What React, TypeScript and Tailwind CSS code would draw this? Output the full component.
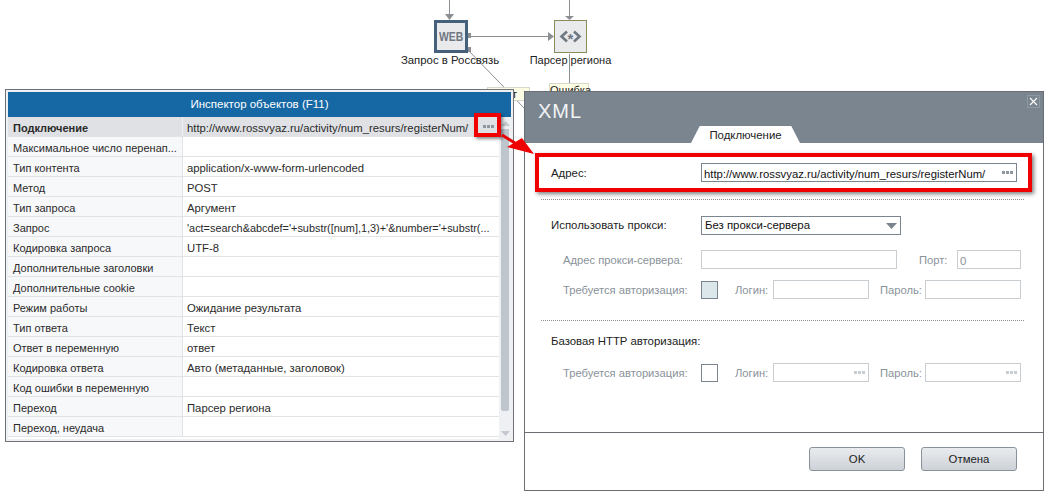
const ROWS = [
  { label: 'Подключение', value: 'http://www.rossvyaz.ru/activity/num_resurs/registerNum/' },
  { label: 'Максимальное число перенап...', value: '' },
  { label: 'Тип контента', value: 'application/x-www-form-urlencoded' },
  { label: 'Метод', value: 'POST' },
  { label: 'Тип запроса', value: 'Аргумент' },
  { label: 'Запрос', value: "'act=search&abcdef='+substr([num],1,3)+'&number='+substr(..." },
  { label: 'Кодировка запроса', value: 'UTF-8' },
  { label: 'Дополнительные заголовки', value: '' },
  { label: 'Дополнительные cookie', value: '' },
  { label: 'Режим работы', value: 'Ожидание результата' },
  { label: 'Тип ответа', value: 'Текст' },
  { label: 'Ответ в переменную', value: 'ответ' },
  { label: 'Кодировка ответа', value: 'Авто (метаданные, заголовок)' },
  { label: 'Код ошибки в переменную', value: '' },
  { label: 'Переход', value: 'Парсер региона' },
  { label: 'Переход, неудача', value: '' },
]

function Dots({ color = 'bg-[#8f979e]' }: { color?: string }) {
  return (
    <span className="ml-auto flex gap-[1px]">
      <span className={`w-[3px] h-[3px] ${color}`} />
      <span className={`w-[3px] h-[3px] ${color}`} />
      <span className={`w-[3px] h-[3px] ${color}`} />
    </span>
  )
}

function Diagram() {
  return (
    <>
      <svg className="absolute left-0 top-0" width="1052" height="140" fill="none">
        <path d="M449.5 0V16M569.5 0V16M468 36.5H550M569.5 54V84M468 50L526 110" stroke="#8b8f93" strokeWidth="1" />
        <path d="M445 14H454L449.5 20ZM565 16H574L569.5 20ZM548 32V41L554 36.5Z" fill="#8b8f93" />
        <path d="M468 33h3v5h-3zM468 47h3v5h-3z" fill="#8b8f93" />
      </svg>
      <div className="absolute left-[434px] top-[20px] w-[34px] h-[33px] border-[3px] border-[#45607a] bg-[#e8eaec] flex items-center justify-center">
        <span className="inline-block scale-x-[0.8] text-[13px] font-bold text-[#6f7881]">WEB</span>
      </div>
      <div className="absolute left-[554px] top-[20px] w-[33px] h-[33px] border border-[#8a8a5a] bg-[#e8eaec] flex items-center justify-center text-[#6f7881]">
        <svg width="9" height="13" viewBox="0 0 9 13" fill="none"><path d="M8 1.5L2.5 6.5l5.5 5" stroke="#6f7881" strokeWidth="2.6" /></svg>
        <span className="text-[15px] font-bold leading-[15px] mt-[3px]">*</span>
        <svg width="9" height="13" viewBox="0 0 9 13" fill="none"><path d="M1 1.5l5.5 5-5.5 5" stroke="#6f7881" strokeWidth="2.6" /></svg>
      </div>
      <p className="absolute left-[380px] top-[53px] w-[140px] text-center text-[11.4px] leading-[14px] text-[#222]">Запрос в Россвязь</p>
      <p className="absolute left-[510px] top-[53px] w-[121px] text-center text-[11px] leading-[14px] text-[#222]">Парсер региона</p>
      <div className="absolute left-[487px] top-[87px] w-[43px] h-[14px] bg-[#fdfde6] border border-[#d8d8c8] text-[11px] leading-[12px] text-right pr-[12px] text-[#222]">ут</div>
      <div className="absolute left-[549px] top-[83px] w-[40px] h-[14px] bg-[#fdfde6] border border-[#d8d8c8] text-[11px] leading-[12px] text-center text-[#222]">Ошибка</div>
    </>
  )
}

function Inspector() {
  return (
    <div className="absolute left-[5px] top-[89px] w-[509px] h-[353px] border border-[#6f7378] bg-[#eef0f2] p-[2px] flex flex-col">
      <div className="h-[25px] shrink-0 bg-[#1668a5] text-white text-[11.5px] flex items-center justify-center">Инспектор объектов (F11)</div>
      <div className="flex flex-1 min-h-0 overflow-hidden">
        <div className="flex-1 min-w-0 overflow-hidden flex flex-col bg-white">
          {ROWS.map((row, i) => (
            <div key={row.label} className={`h-[20px] flex shrink-0 border-b border-[#e1e3e6] text-[#2a2a2a] ${i === 0 ? 'bg-[#dfe1e4] border-[#dfe1e4]' : ''}`}>
              <div className={`w-[175px] shrink-0 pl-[5px] pt-[2px] text-[11px] leading-[19px] border-r border-[#e1e3e6] whitespace-nowrap ${i === 0 ? 'font-bold border-[#eef0f2]' : 'bg-[#f7f8fa]'}`}>{row.label}</div>
              <div className={`flex-1 min-w-0 pl-[4px] whitespace-nowrap flex items-center ${i === 5 ? 'text-[10.9px]' : 'text-[11.3px]'}`}>
                <span className="pt-[4px] leading-[19px]">{row.value}</span>
                {i === 0 && <span className="ml-auto mr-[5px]"><Dots /></span>}
              </div>
            </div>
          ))}
        </div>
        <div className="w-[12px] shrink-0 bg-[#eef0f3] flex flex-col items-center pt-[4px] pb-[3px]">
          <svg width="9" height="5" viewBox="0 0 9 5"><path d="M0 5L4.5 0 9 5Z" fill="#c4c9cf" /></svg>
          <div className="w-[8px] h-[282px] mt-[3px] rounded-b-[2px] bg-[#bfc5cd]" />
          <svg className="mt-auto" width="9" height="5" viewBox="0 0 9 5"><path d="M0 0L4.5 5 9 0Z" fill="#c4c9cf" /></svg>
        </div>
      </div>
    </div>
  )
}

function Field({ width, dots = false, value = '', strong = false }: { width: string; dots?: boolean; value?: string; strong?: boolean }) {
  return (
    <div className={`${width} h-[19px] shrink-0 border ${strong ? 'border-[#7a858f] text-[#111] text-[11.3px]' : 'border-[#c8cdd1] text-[#8a9299]'} bg-white flex items-center pl-[2px] pr-[3px] whitespace-nowrap`}>
      {value && <span className="pt-[2px] leading-[14px]">{value}</span>}
      {dots && <Dots color={strong ? 'bg-[#8f979e]' : 'bg-[#c8cdd1]'} />}
    </div>
  )
}

function AuthRow({ checked, dots, className }: { checked: boolean; dots: boolean; className: string }) {
  return (
    <div className={`flex items-center h-[19px] pl-[38px] text-[#8a9299] ${className}`}>
      <span className="w-[138px] shrink-0 pt-[2px] text-[11.2px]">Требуется авторизация:</span>
      <span className={`w-[17px] h-[18px] shrink-0 border border-[#7a858f] ${checked ? 'bg-[#dce7ec]' : 'bg-white'}`} />
      <span className="w-[38px] ml-[17px] shrink-0 pt-[2px] text-[11.2px]">Логин:</span>
      <Field width="w-[96px]" dots={dots} />
      <span className="w-[45px] ml-[11px] shrink-0 pt-[2px] text-[11.2px]">Пароль:</span>
      <Field width="w-[96px]" dots={dots} />
    </div>
  )
}

function XmlDialog() {
  return (
    <div className="absolute left-[524px] top-[91px] w-[520px] h-[400px] border border-[#6b6f73] bg-white flex flex-col text-[11.4px]">
      <div className="h-[51px] shrink-0 bg-[#7a858f] relative">
        <span className="absolute left-[13px] top-[6px] text-[20px] leading-[26px] tracking-[1px] text-[#f2f3f4]">XML</span>
        <span className="absolute right-[3px] top-[3px] w-[13px] h-[13px] border border-[#8f99a2] flex items-center justify-center">
          <svg width="9" height="9" viewBox="0 0 9 9" fill="none"><path d="M1 1l7 7M8 1L1 8" stroke="#fff" strokeWidth="1.1" /></svg>
        </span>
        <div className="absolute left-[166px] bottom-0 w-[109px] h-[17px] bg-white [clip-path:polygon(8%_0,92%_0,100%_100%,0_100%)] text-center leading-[19px] text-[#222]">Подключение</div>
      </div>

      <div className="flex-1 flex flex-col">
        <div className="flex items-center h-[19px] mt-[20px] pl-[26px] text-[#222]">
          <span className="w-[150px] shrink-0 pt-[2px]">Адрес:</span>
          <Field width="w-[316px]" strong dots value="http://www.rossvyaz.ru/activity/num_resurs/registerNum/" />
        </div>
        <div className="ml-[16px] w-[483px] mt-[17px] border-t border-dotted border-[#8a9299]" />

        <div className="flex items-center h-[19px] mt-[16px] pl-[26px] text-[#222]">
          <span className="w-[150px] shrink-0">Использовать прокси:</span>
          <div className="w-[200px] h-[19px] border border-[#7a858f] flex items-center justify-between pl-[3px] pr-[3px] text-[#111]">
            <span className="pt-[1px]">Без прокси-сервера</span>
            <svg width="11" height="6" viewBox="0 0 11 6"><path d="M0 0H11L5.5 6Z" fill="#7a858f" /></svg>
          </div>
        </div>

        <div className="flex items-center h-[19px] mt-[15px] pl-[38px] text-[#8a9299]">
          <span className="w-[138px] shrink-0 pt-[2px] text-[11.2px]">Адрес прокси-сервера:</span>
          <Field width="w-[196px]" />
          <span className="w-[38px] ml-[22px] shrink-0 pt-[2px] text-[11.2px]">Порт:</span>
          <Field width="w-[64px]" value="0" />
        </div>
        <AuthRow checked dots={false} className="mt-[11px]" />
        <div className="ml-[16px] w-[483px] mt-[21px] border-t border-dotted border-[#8a9299]" />

        <p className="pl-[26px] mt-[13px] leading-[14px] text-[#222]">Базовая HTTP авторизация:</p>
        <AuthRow checked={false} dots className="mt-[15px]" />
      </div>

      <div className="h-[58px] shrink-0 border-t border-[#6b6f73] flex justify-end items-start gap-[16px] pt-[14px] pr-[26px]">
        <button className="w-[96px] h-[24px] rounded-[3px] border border-[#8a9299] bg-gradient-to-b from-[#e9ebee] to-[#cdd2d8] text-[#222] pt-[1px]">OK</button>
        <button className="w-[96px] h-[24px] rounded-[3px] border border-[#8a9299] bg-gradient-to-b from-[#e9ebee] to-[#cdd2d8] text-[#222] pt-[1px]">Отмена</button>
      </div>
    </div>
  )
}

function Highlights() {
  return (
    <>
      <div className="absolute left-[474px] top-[113px] w-[27px] h-[24px] border-[4px] border-[#f00000] shadow-[2px_2px_3px_rgba(0,0,0,0.45)]" />
      <div className="absolute left-[535px] top-[153px] w-[497px] h-[39px] border-[4px] border-[#f00000] shadow-[2px_2px_4px_rgba(0,0,0,0.5)]" />
      <svg className="absolute left-[498px] top-[134px]" width="40" height="24" viewBox="0 0 40 24">
        <path d="M4 1L17 9" stroke="#e60000" strokeWidth="3" />
        <path d="M36 20L24 4L9 13Z" fill="#f00000" />
      </svg>
    </>
  )
}

export default function App() {
  return (
    <div className="relative w-[1052px] h-[496px] bg-white overflow-hidden font-['Liberation_Sans',Arial,sans-serif]">
      <Diagram />
      <Inspector />
      <XmlDialog />
      <Highlights />
    </div>
  )
}
